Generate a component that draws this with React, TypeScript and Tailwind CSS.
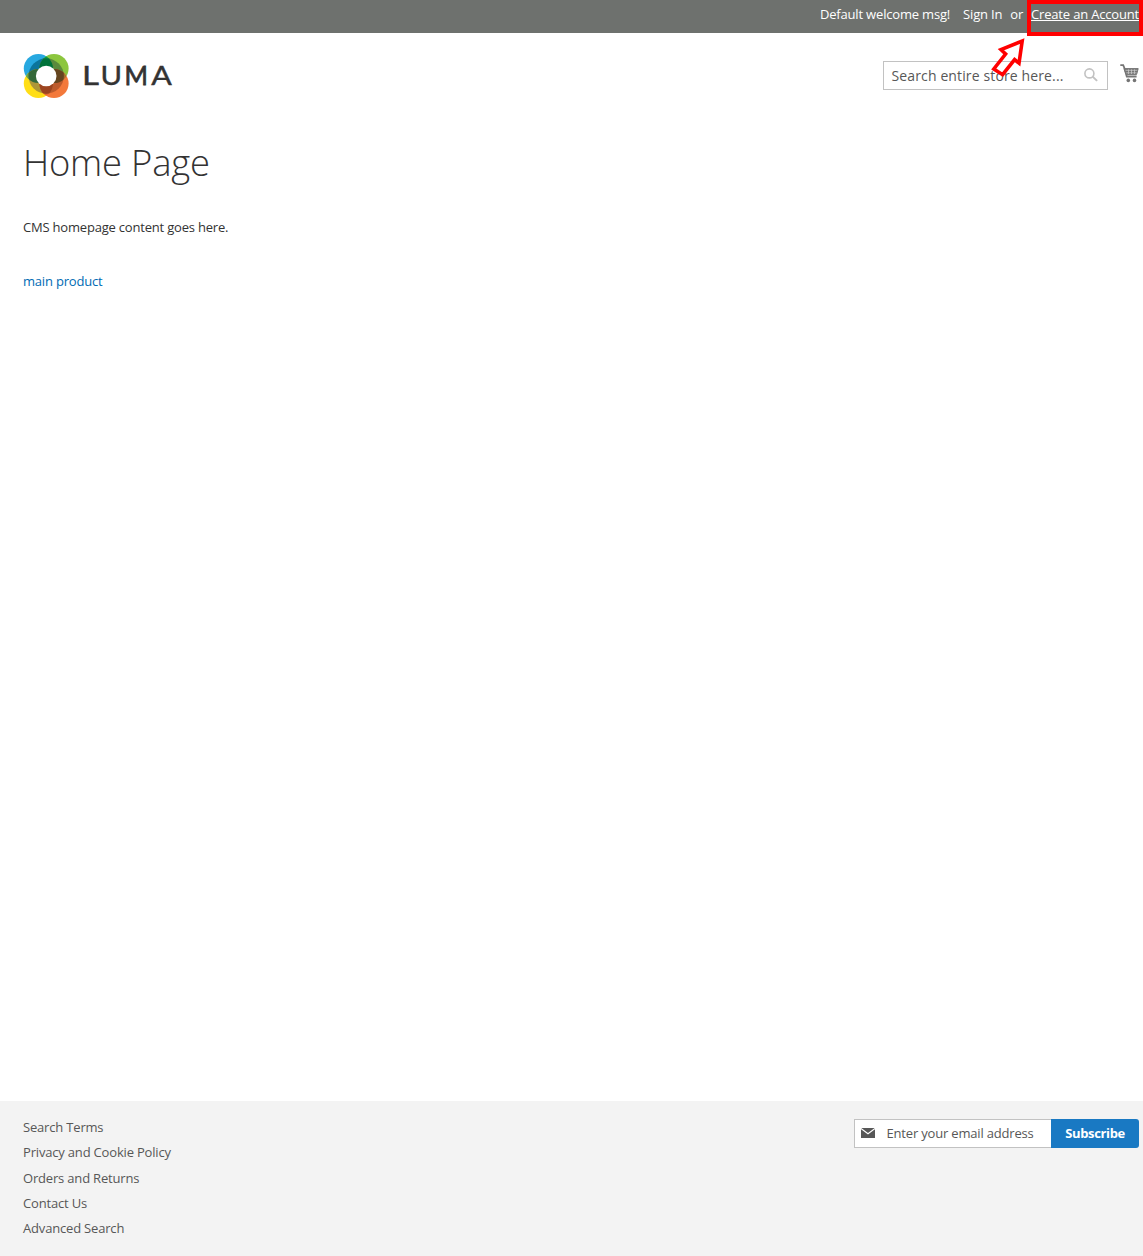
import React from 'react';

const footerLinks = ['Search Terms', 'Privacy and Cookie Policy', 'Orders and Returns', 'Contact Us', 'Advanced Search'];

function Logo() {
  return (
    <svg width="150" height="46" viewBox="23 53 150 46" className="block" aria-label="Luma">
      <defs>
        <clipPath id="tl"><circle cx="38.4" cy="68.5" r="14.6" /></clipPath>
        <clipPath id="br"><circle cx="54" cy="83.5" r="14.6" /></clipPath>
        <clipPath id="ring"><circle cx="46.2" cy="76" r="17.7" /></clipPath>
      </defs>
      <circle cx="38.4" cy="68.5" r="14.6" fill="#27a8e0" />
      <circle cx="54" cy="68.5" r="14.6" fill="#8cc63e" />
      <circle cx="38.4" cy="83.5" r="14.6" fill="#ffde17" />
      <circle cx="54" cy="83.5" r="14.6" fill="#f3793b" />
      <circle cx="54" cy="68.5" r="14.6" fill="#00a04a" clipPath="url(#tl)" />
      <circle cx="38.4" cy="83.5" r="14.6" fill="#6aa744" clipPath="url(#tl)" />
      <circle cx="54" cy="68.5" r="14.6" fill="#a4702c" clipPath="url(#br)" />
      <circle cx="38.4" cy="83.5" r="14.6" fill="#e9662b" clipPath="url(#br)" />
      <g clipPath="url(#ring)">
        <circle cx="38.4" cy="68.5" r="14.6" fill="#0b749c" />
        <circle cx="54" cy="68.5" r="14.6" fill="#5b8a3c" />
        <circle cx="38.4" cy="83.5" r="14.6" fill="#ad9638" />
        <circle cx="54" cy="83.5" r="14.6" fill="#bd5b2d" />
        <g clipPath="url(#tl)">
          <circle cx="38.4" cy="83.5" r="14.6" fill="#34693a" />
          <circle cx="54" cy="68.5" r="14.6" fill="#00733b" />
        </g>
        <g clipPath="url(#br)">
          <circle cx="38.4" cy="83.5" r="14.6" fill="#9d4520" />
          <circle cx="54" cy="68.5" r="14.6" fill="#65451f" />
        </g>
      </g>
      <circle cx="46.2" cy="76" r="10.3" fill="#fff" />
      <text y="85.3" fontFamily="Lato" fontSize="26.5" fontWeight="400" fill="#333" stroke="#333" strokeWidth=".4">
        <tspan x="82" textLength="17" lengthAdjust="spacingAndGlyphs">L</tspan><tspan x="100.4" textLength="21.6" lengthAdjust="spacingAndGlyphs">U</tspan><tspan x="124.4" strokeWidth=".8" textLength="23.4" lengthAdjust="spacingAndGlyphs">M</tspan><tspan x="151.2" textLength="20.6" lengthAdjust="spacingAndGlyphs">A</tspan>
      </text>
    </svg>
  );
}

function CartIcon() {
  return (
    <svg width="19" height="19" viewBox="0 0 19 19" className="block" fill="none" stroke="#757575">
      <path d="M.3 1.2h2.9l1 2.3 2.6 9h9.8" strokeWidth="1.8" />
      <path d="M4 4.6h14.2l-1.6 5.8H6.2z" fill="#757575" strokeWidth="1" />
      <path d="M5.5 6.3h11.7M6.3 8.8h10.2M8.5 5.4v4.6M11.5 5.4v4.6M14.5 5.4v4.6" stroke="#d0d0d0" strokeWidth=".7" />
      <circle cx="8.3" cy="16.4" r="1.8" fill="#757575" stroke="none" />
      <circle cx="14.5" cy="16.4" r="1.8" fill="#757575" stroke="none" />
    </svg>
  );
}

export default function App() {
  return (
    <div className="relative flex h-[1256px] w-[1143px] flex-col overflow-hidden bg-white font-['Open_Sans',sans-serif] text-[13px] leading-[18px] text-[#333]">
      <div className="flex h-[33px] shrink-0 justify-end bg-[#6e716e] pt-[5px] pr-[4px] tracking-[-0.18px] whitespace-nowrap text-white">
        <span className="mr-[13px]">Default welcome msg!</span>
        <a href="#">Sign In</a>
        <span className="mx-2">or</span>
        <a href="#" className="underline">Create an Account</a>
      </div>

      <header className="flex h-[96px] shrink-0 items-start justify-between pr-[4px] pl-[23px]">
        <div className="pt-5"><Logo /></div>
        <div className="flex pt-7">
          <div className="flex h-[29px] w-[225px] items-center justify-between border border-[#c2c2c2] pr-[9px] pl-[7.5px] text-sm tracking-[0.13px] whitespace-nowrap text-[#575757]">
            <span>Search entire store here...</span>
            <svg width="14" height="14" viewBox="0 0 14 14" fill="none" stroke="#c2c2c2" className="mb-[2px]">
              <circle cx="5.4" cy="5.4" r="4.5" strokeWidth="1.6" />
              <path d="m8.6 8.6 4.5 4.3" strokeWidth="2" />
            </svg>
          </div>
          <div className="ml-3 pt-[3px]"><CartIcon /></div>
        </div>
      </header>

      <main className="flex-1 pl-[23px] tracking-[-0.2px]">
        <h1 className="mt-[11px] text-[36.4px] leading-[44px] font-light whitespace-nowrap">Home Page</h1>
        <p className="mt-[34px]">CMS homepage content goes here.</p>
        <p className="mt-9"><a href="#" className="text-[#006bb4]">main product</a></p>
      </main>

      <footer className="flex h-[155px] shrink-0 items-start justify-between bg-[#f3f3f3] pr-[4px] pl-[23px] tracking-[-0.18px] text-[#575757]">
        <ul className="flex flex-col gap-[7.3px] pt-[17px]">
          {footerLinks.map((label) => <li key={label}><a href="#">{label}</a></li>)}
        </ul>
        <div className="mt-[18px] flex h-[29px]">
          <div className="flex w-[197px] items-center border border-r-0 border-[#c2c2c2] bg-white pb-px pl-[6px]">
            <svg width="14" height="10" viewBox="0 0 14 10" className="mr-[11.5px]">
              <path d="M.3 0h13.4L7 5z M0 1.3 7 6.4l7-5.1V10H0z" fill="#575757" />
            </svg>
            <span>Enter your email address</span>
          </div>
          <button className="w-[88px] rounded-r-[3px] bg-[#1979c3] pb-px font-bold tracking-[-0.35px] text-white">Subscribe</button>
        </div>
      </footer>

      <div className="absolute top-0 left-[1027px] h-[36px] w-[116px] border-4 border-[#ff0000]" />
      <svg width="36" height="42" viewBox="990 36 36 42" className="absolute top-[36px] left-[990px]">
        <path d="M1022.2 41 1019 63.2 1014.6 59.6 1002.6 74.7 993.8 69 1005.6 54 1001 49.7Z" fill="none" stroke="#f00" strokeWidth="3.6" />
      </svg>
    </div>
  );
}
